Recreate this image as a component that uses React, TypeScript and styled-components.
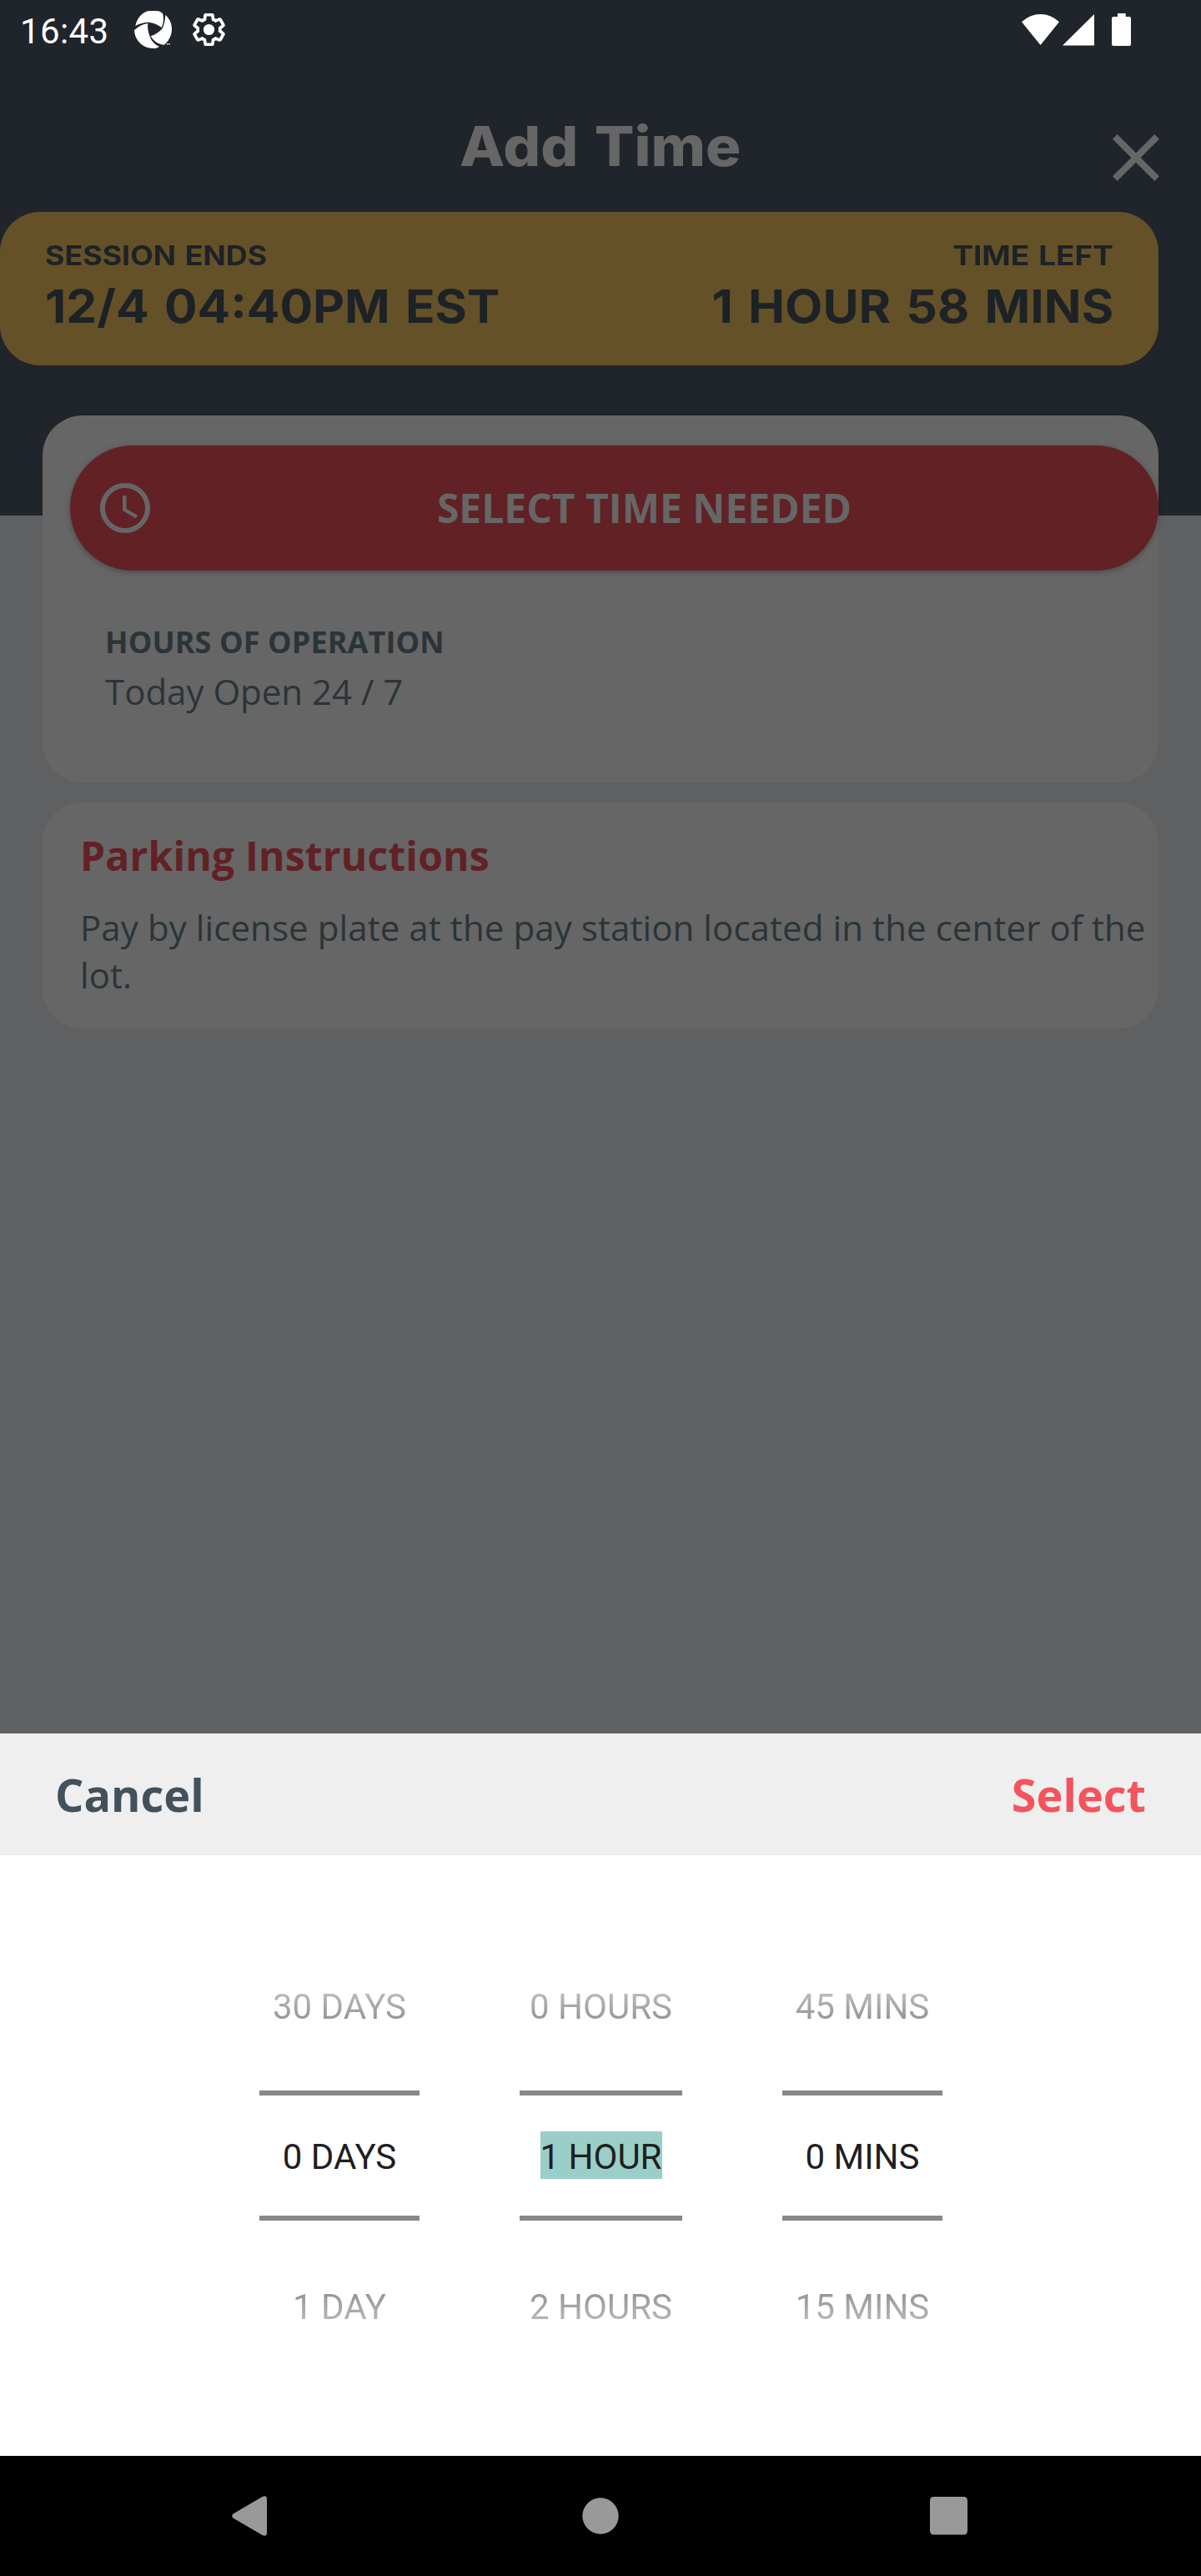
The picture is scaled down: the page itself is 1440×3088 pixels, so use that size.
import React from "react";
import styled, { createGlobalStyle } from "styled-components";

const colors = {
  header: "#20242b",
  page: "#5f6062",
  surface: "#666666",
  yellow: "#655128",
  ink: "#1c2226",
  red: "#612125",
  slate: "#2a3439",
};

const headingFont = `Inter, "Noto Sans", sans-serif`;
const bodyFont = `"Open Sans", "Noto Sans", sans-serif`;
const systemFont = `Roboto, "Noto Sans", sans-serif`;

const GlobalStyle = createGlobalStyle`
  *, *::before, *::after { box-sizing: border-box; }
  body { margin: 0; background: #000; }
  button { border: 0; padding: 0; background: none; font: inherit; color: inherit; }
  h1, h2, p { margin: 0; }
  svg { display: block; flex: none; }
`;

const Screen = styled.div`
  width: 1440px;
  height: 3088px;
  display: flex;
  flex-direction: column;
  background: linear-gradient(${colors.header} 618px, ${colors.page} 618px);
  font-family: ${bodyFont};
`;

/* System status bar */
const StatusBar = styled.header`
  height: 71px;
  flex: none;
  display: flex;
  align-items: center;
  padding: 0 84px 0 24px;
  color: #fff;
`;

const Clock = styled.span`
  font: 400 42px/50px ${systemFont};
  letter-spacing: 0.4px;
  padding-top: 4px;
  width: 137px;
`;

const Notifications = styled.div`
  display: flex;
  align-items: center;
  gap: 25px;
  padding-top: 1px;
  margin-right: auto;
`;

/* App bar */
const TitleBar = styled.div`
  height: 183px;
  flex: none;
  display: grid;
  grid-template-columns: 1fr auto 1fr;
  align-items: center;
  padding: 25px 30px 0;
  color: ${colors.surface};
`;

const Title = styled.h1`
  grid-column: 2;
  font: 800 66px/80px ${headingFont};
  word-spacing: 4px;
  transform: scaleX(1.069);
`;

const CloseButton = styled.button`
  justify-self: end;
  margin-top: 28px;
  color: ${colors.surface};
`;

/* Session banner */
const Banner = styled.section`
  height: 184px;
  flex: none;
  margin-right: 51px;
  padding: 30px 54px 0 54px;
  border-radius: 48px;
  display: flex;
  justify-content: space-between;
  background: ${colors.yellow};
  color: ${colors.ink};
`;

const BannerColumn = styled.div<{ $end?: boolean }>`
  display: flex;
  flex-direction: column;
  align-items: ${(p) => (p.$end ? "flex-end" : "flex-start")};
  font-family: ${headingFont};
  font-weight: 700;
`;

const BannerLabel = styled.span<{ $stretch: number; $end?: boolean }>`
  font-size: 32px;
  line-height: 45px;
  word-spacing: 2px;
  transform: scaleX(${(p) => p.$stretch});
  transform-origin: ${(p) => (p.$end ? "right" : "left")};
`;

const BannerValue = styled(BannerLabel)`
  font-size: 55px;
  line-height: 76px;
  word-spacing: 4px;
`;

/* Content cards */
const Content = styled.main`
  flex: 1;
  padding: 60px 51px 0;
  display: flex;
  flex-direction: column;
  gap: 24px;
`;

const Card = styled.section<{ $height: number }>`
  height: ${(p) => p.$height}px;
  border-radius: 48px;
  background: ${colors.surface};
`;

const TimeCard = styled(Card)`
  padding: 36px 0 0 33px;
`;

const TimeButton = styled.button`
  width: 100%;
  height: 150px;
  border-radius: 75px;
  padding: 0 30px 1px;
  display: flex;
  align-items: center;
  background: ${colors.red};
  color: ${colors.surface};
  box-shadow: 0 2px 7px rgba(0, 0, 0, 0.28);
`;

const TimeButtonLabel = styled.span`
  flex: 1;
  text-align: center;
  font: 700 48px/65px ${bodyFont};
`;

const Hours = styled.div`
  padding: 61px 0 0 42px;
  display: flex;
  flex-direction: column;
  gap: 6px;
  color: ${colors.slate};
`;

const HoursHeading = styled.h2`
  font: 700 36px/49px ${bodyFont};
  letter-spacing: 0.1px;
`;

const BodyText = styled.p`
  font: 400 42px/57px ${bodyFont};
  color: ${colors.slate};
`;

const InstructionsCard = styled(Card)`
  padding: 31px 0 0 45px;
`;

const InstructionsHeading = styled.h2`
  font: 700 48px/65px ${bodyFont};
  letter-spacing: 0.18px;
  color: ${colors.red};
  margin-bottom: 25px;
`;

const InstructionsText = styled(BodyText)`
  letter-spacing: 0.09px;
`;

/* Bottom sheet picker */
const Sheet = styled.section`
  flex: none;
  background: #fff;
`;

const SheetActions = styled.div`
  height: 146px;
  display: flex;
  align-items: center;
  justify-content: space-between;
  padding: 0 66px;
  background: #efefef;
`;

const ActionButton = styled.button<{ $tone: string }>`
  font: 700 54px/74px ${bodyFont};
  color: ${(p) => p.$tone};
`;

const Wheels = styled.div`
  height: 720px;
  display: grid;
  grid-template-columns: 192px 195px 192px;
  column-gap: 120px;
  justify-content: center;
  align-content: center;
`;

const Wheel = styled.div`
  display: grid;
  grid-template-rows: 180px 156px 180px;
  row-gap: 12px;
  text-align: center;
  white-space: nowrap;
  font: 400 42px/60px ${systemFont};
`;

const WheelItem = styled.div`
  display: flex;
  align-items: center;
  justify-content: center;
  padding: 3px 0 0 1px;
`;

const FadedText = styled.span<{ $from: string; $to: string }>`
  background: linear-gradient(${(p) => p.$from} 14px, ${(p) => p.$to} 44px);
  background-clip: text;
  -webkit-background-clip: text;
  color: transparent;
`;

const SelectedItem = styled.div`
  display: flex;
  align-items: center;
  justify-content: center;
  border: solid #888;
  border-width: 6px 0;
  padding: 0 0 1px 1px;
  color: #1f1f1f;
`;

const SelectedText = styled.span<{ $highlighted?: boolean }>`
  height: 57px;
  line-height: 61px;
  background: ${(p) => (p.$highlighted ? "#9acfc9" : "transparent")};
`;

/* System navigation bar */
const NavBar = styled.nav`
  height: 144px;
  flex: none;
  display: flex;
  align-items: center;
  justify-content: space-between;
  padding: 0 280px 0 278px;
  background: #000;
  color: #999;
`;

const HomeIcon = styled.svg`
  margin-left: 5px;
`;

const wheels = [
  { prev: "30 DAYS", current: "0 DAYS", next: "1 DAY" },
  { prev: "0 HOURS", current: "1 HOUR", next: "2 HOURS", highlighted: true },
  { prev: "45 MINS", current: "0 MINS", next: "15 MINS" },
];

const ApertureIcon = () => (
  <svg width="45.3" height="45.3" viewBox="0 0 136 136" fill="currentColor">
    <path d="M4 54C8 32 24 9 48 1Q68-1 88 1Q96 4 102 9C107 25 106 44 98 60C86 50 68 42 51 41C35 41 18 46 4 54Z" />
    <path d="M112 15C126 27 135 44 135 63C136 88 124 108 108 122C88 122 70 110 59 91C76 86 91 76 101 64C108 50 111 32 112 15Z" />
    <path d="M0 70C14 56 30 48 49 45C47 60 50 76 56 92C62 109 74 122 90 128C82 134 76 135 68 135C30 135 2 106 0 70Z" />
    <path d="M117 117h5v2h-2v4h-2v-4h-1zM123 117h5v6h-1v-3l-1 2h-1l-1-2z" />
  </svg>
);

const GearIcon = () => (
  <svg width="39" height="39" viewBox="1.05 1.05 21.9 21.9">
    <path
      d="M19.43 12.98c.04-.32.07-.64.07-.98 0-.34-.03-.66-.07-.98l2.11-1.65c.19-.15.24-.42.12-.64l-2-3.46c-.09-.16-.26-.25-.44-.25-.06 0-.12.01-.17.03l-2.49 1c-.52-.4-1.08-.73-1.69-.98l-.38-2.65C14.46 2.18 14.25 2 14 2h-4c-.25 0-.46.18-.49.42l-.38 2.65c-.61.25-1.17.59-1.69.98l-2.49-1c-.06-.02-.12-.03-.18-.03-.17 0-.34.09-.43.25l-2 3.46c-.13.22-.07.49.12.64l2.11 1.65c-.04.32-.07.65-.07.98 0 .33.03.66.07.98l-2.11 1.65c-.19.15-.24.42-.12.64l2 3.46c.09.16.26.25.44.25.06 0 .12-.01.17-.03l2.49-1c.52.4 1.08.73 1.69.98l.38 2.65c.03.24.24.42.49.42h4c.25 0 .46-.18.49-.42l.38-2.65c.61-.25 1.17-.59 1.69-.98l2.49 1c.06.02.12.03.18.03.17 0 .34-.09.43-.25l2-3.46c.12-.22.07-.49-.12-.64l-2.11-1.65z"
      fill="none"
      stroke="currentColor"
      strokeWidth="2.1"
    />
    <circle cx="12" cy="12" r="3.7" fill="currentColor" />
  </svg>
);

const ConnectivityIcons = () => (
  <svg width="131" height="39" viewBox="0 0 131 39" fill="currentColor">
    <path d="M0 10.3A32 32 0 0 1 45 10.3L22.5 38Z" />
    <path d="M87 1V38.4H49Z" />
    <path d="M115 0h9.7v4H129a2 2 0 0 1 2 2v31a2 2 0 0 1-2 2h-19a2 2 0 0 1-2-2V6a2 2 0 0 1 2-2h5z" />
  </svg>
);

const CloseIcon = () => (
  <svg width="96" height="96" viewBox="0 0 24 24" fill="currentColor">
    <path d="M19 6.41L17.59 5 12 10.59 6.41 5 5 6.41 10.59 12 5 17.59 6.41 19 12 13.41 17.59 19 19 17.59 13.41 12z" />
  </svg>
);

const ClockIcon = () => (
  <svg width="72" height="72" viewBox="0 0 24 24" fill="currentColor">
    <path d="M11.99 2C6.47 2 2 6.48 2 12s4.47 10 9.99 10C17.52 22 22 17.52 22 12S17.52 2 11.99 2zM12 20c-4.42 0-8-3.58-8-8s3.58-8 8-8 8 3.58 8 8-3.58 8-8 8zM12.5 7H11v6l5.25 3.15.75-1.23-4.5-2.67z" />
  </svg>
);

export default function App() {
  return (
    <Screen>
      <GlobalStyle />
      <StatusBar>
        <Clock>16:43</Clock>
        <Notifications>
          <ApertureIcon />
          <GearIcon />
        </Notifications>
        <ConnectivityIcons />
      </StatusBar>

      <TitleBar>
        <Title>Add Time</Title>
        <CloseButton aria-label="Close">
          <CloseIcon />
        </CloseButton>
      </TitleBar>

      <Banner>
        <BannerColumn>
          <BannerLabel $stretch={1.119}>SESSION ENDS</BannerLabel>
          <BannerValue $stretch={1.067}>12/4 04:40PM EST</BannerValue>
        </BannerColumn>
        <BannerColumn $end>
          <BannerLabel $stretch={1.154} $end>TIME LEFT</BannerLabel>
          <BannerValue $stretch={1.07} $end>1 HOUR 58 MINS</BannerValue>
        </BannerColumn>
      </Banner>

      <Content>
        <TimeCard $height={440}>
          <TimeButton>
            <ClockIcon />
            <TimeButtonLabel>SELECT TIME NEEDED</TimeButtonLabel>
          </TimeButton>
          <Hours>
            <HoursHeading>HOURS OF OPERATION</HoursHeading>
            <BodyText>Today Open 24 / 7</BodyText>
          </Hours>
        </TimeCard>
        <InstructionsCard $height={271}>
          <InstructionsHeading>Parking Instructions</InstructionsHeading>
          <InstructionsText>
            Pay by license plate at the pay station located in the center of the lot.
          </InstructionsText>
        </InstructionsCard>
      </Content>

      <Sheet>
        <SheetActions>
          <ActionButton $tone="#42515b">Cancel</ActionButton>
          <ActionButton $tone="#f4545d">Select</ActionButton>
        </SheetActions>
        <Wheels>
          {wheels.map((w) => (
            <Wheel key={w.current}>
              <WheelItem>
                <FadedText $from="#bababa" $to="#969696">{w.prev}</FadedText>
              </WheelItem>
              <SelectedItem>
                <SelectedText $highlighted={w.highlighted}>{w.current}</SelectedText>
              </SelectedItem>
              <WheelItem>
                <FadedText $from="#969696" $to="#b5b5b5">{w.next}</FadedText>
              </WheelItem>
            </Wheel>
          ))}
        </Wheels>
      </Sheet>

      <NavBar>
        <svg width="42" height="48" viewBox="0 0 42 48" fill="currentColor">
          <path d="M1.5 21.5 36.5 1Q42-1.500 42 4V44Q42 49.500 36.500 47L1.500 26.500Q-1 24 1.500 21.500Z" />
        </svg>
        <HomeIcon width="44" height="44" viewBox="0 0 44 44" fill="currentColor">
          <circle cx="22" cy="22" r="21.7" />
        </HomeIcon>
        <svg width="45" height="46" viewBox="0 0 45 46" fill="currentColor">
          <rect width="45" height="45.500" rx="4.500" />
        </svg>
      </NavBar>
    </Screen>
  );
}
